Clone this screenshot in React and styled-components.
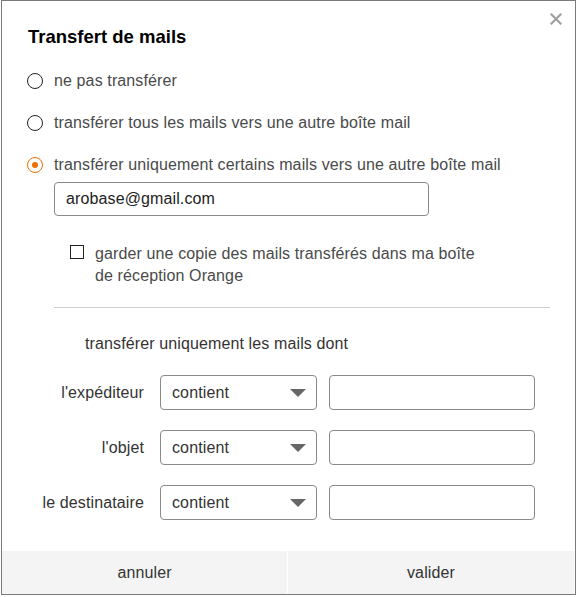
import React from 'react';
import styled, { createGlobalStyle } from 'styled-components';

const Global = createGlobalStyle`
  html, body { margin: 0; padding: 0; background: #fff; }
  body { font-family: "Liberation Sans", Arial, sans-serif; color: #333; letter-spacing: 0.12px; }
  * { box-sizing: border-box; }
`;

const Dialog = styled.div`
  position: relative;
  width: 575px;
  height: 595px;
  margin-left: 1px;
  border: 1px solid #7a7a7a;
  background: #fff;
  display: flex;
  flex-direction: column;
`;

const Close = styled.button`
  position: absolute;
  top: 12px;
  right: 13px;
  width: 12px;
  height: 12px;
  padding: 0;
  border: none;
  background: none;
  display: flex;
  cursor: pointer;
`;

const Body = styled.div`
  flex: 1;
  padding: 26px 0 0 25px;
  display: flex;
  flex-direction: column;
`;

const Title = styled.h2`
  margin: 0 0 0 1px;
  font-size: 18.5px;
  line-height: 20px;
  font-weight: bold;
  letter-spacing: 0;
  color: #000;
`;

const RadioGroup = styled.div`
  margin-top: 22px;
  display: flex;
  flex-direction: column;
  gap: 20px;
`;

const RadioRow = styled.label`
  display: flex;
  align-items: center;
  gap: 11px;
  height: 22px;
  padding-top: 1px;
  font-size: 16px;
  color: #4a4a4a;
`;

const RadioDot = styled.span`
  width: 16px;
  height: 16px;
  border-radius: 50%;
  border: 1.5px solid ${p => (p.$checked ? '#f16e00' : '#222')};
  display: flex;
  align-items: center;
  justify-content: center;
  flex: none;
  &::after {
    content: '';
    width: 6px;
    height: 6px;
    border-radius: 50%;
    background: ${p => (p.$checked ? '#f16e00' : 'transparent')};
  }
`;

const TextInput = styled.div`
  height: ${p => p.$h || 34}px;
  width: ${p => p.$w}px;
  margin-left: ${p => p.$ml || 0}px;
  margin-top: ${p => p.$mt || 0}px;
  border: 1px solid #8a8a8a;
  border-radius: 4px;
  padding: 0 11px;
  display: flex;
  align-items: center;
  font-size: 16px;
  color: #222;
  background: #fff;
`;

const CheckRow = styled.label`
  margin: 27px 0 0 43px;
  display: flex;
  align-items: flex-start;
  gap: 11px;
`;

const CheckBox = styled.span`
  width: 14px;
  height: 14px;
  margin-top: 2px;
  border: 1.5px solid #222;
  flex: none;
`;

const CheckText = styled.span`
  width: 392px;
  font-size: 16px;
  line-height: 22px;
  color: #4a4a4a;
`;

const Divider = styled.hr`
  margin: 20px 0 0 27px;
  width: 496px;
  height: 1px;
  border: none;
  background: #cfcfcf;
`;

const SubTitle = styled.div`
  margin: 25px 0 0 58px;
  font-size: 16px;
  line-height: 22px;
  color: #333;
`;

const FilterGrid = styled.div`
  margin-top: 20px;
  display: grid;
  grid-template-columns: 121px 157px 206px;
  grid-auto-rows: 35px;
  column-gap: 12px;
  row-gap: 20px;
  align-items: center;
`;

const FilterLabel = styled.div`
  text-align: right;
  padding-right: 4px;
  font-size: 16px;
  color: #333;
`;

const Select = styled.div`
  height: 35px;
  border: 1px solid #8a8a8a;
  border-radius: 4px;
  padding: 0 10px 0 11px;
  display: flex;
  align-items: center;
  justify-content: space-between;
  font-size: 16px;
  color: #333;
`;

const Field = styled.div`
  height: 35px;
  border: 1px solid #8a8a8a;
  border-radius: 4px;
`;

const Footer = styled.div`
  margin-right: 1px;
  height: 43px;
  display: grid;
  grid-template-columns: 285px 1fr;
  column-gap: 1px;
  background: #fff;
`;

const FooterButton = styled.button`
  border: none;
  background: #f4f4f4;
  font-family: inherit;
  letter-spacing: inherit;
  font-size: 16px;
  color: #333;
  cursor: pointer;
`;

const Caret = () => (
  <svg width="16" height="8" viewBox="0 0 16 8">
    <path d="M0 0 H16 L8 8 Z" fill="#666" />
  </svg>
);

const filters = ["l'expéditeur", "l'objet", 'le destinataire'];

export default function App() {
  return (
    <>
      <Global />
      <Dialog>
        <Close aria-label="fermer">
          <svg width="12" height="12" viewBox="0 0 12 12">
            <path d="M1.5 1.5 L10.5 10.5 M10.5 1.5 L1.5 10.5" stroke="#a0a0a0" strokeWidth="2.2" strokeLinecap="square" />
          </svg>
        </Close>
        <Body>
          <Title>Transfert de mails</Title>
          <RadioGroup>
            <RadioRow><RadioDot />ne pas transférer</RadioRow>
            <RadioRow><RadioDot />transférer tous les mails vers une autre boîte mail</RadioRow>
            <RadioRow><RadioDot $checked />transférer uniquement certains mails vers une autre boîte mail</RadioRow>
          </RadioGroup>
          <TextInput $w={375} $ml={27} $mt={7}>arobase@gmail.com</TextInput>
          <CheckRow>
            <CheckBox />
            <CheckText>garder une copie des mails transférés dans ma boîte de réception Orange</CheckText>
          </CheckRow>
          <Divider />
          <SubTitle>transférer uniquement les mails dont</SubTitle>
          <FilterGrid>
            {filters.map(f => (
              <React.Fragment key={f}>
                <FilterLabel>{f}</FilterLabel>
                <Select>contient<Caret /></Select>
                <Field />
              </React.Fragment>
            ))}
          </FilterGrid>
        </Body>
        <Footer>
          <FooterButton>annuler</FooterButton>
          <FooterButton>valider</FooterButton>
        </Footer>
      </Dialog>
    </>
  );
}
